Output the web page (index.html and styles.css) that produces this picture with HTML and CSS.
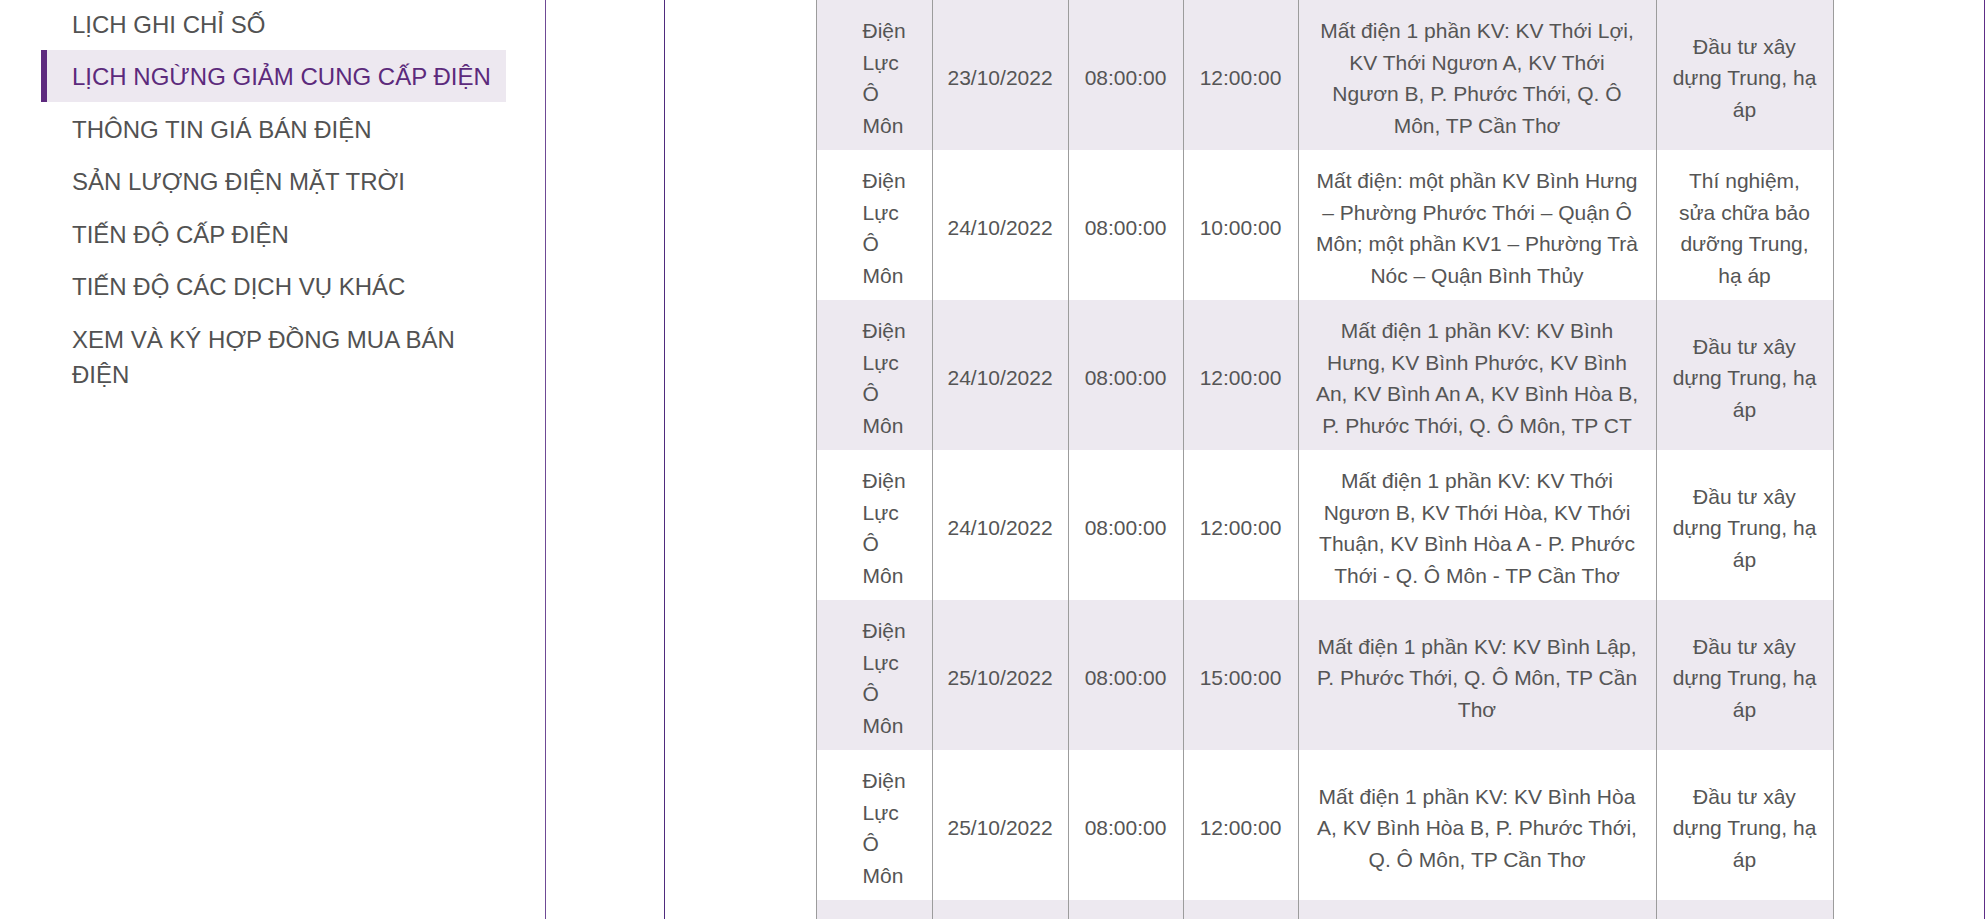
FILE: index.html
```html
<!DOCTYPE html>
<html lang="vi">
<head>
<meta charset="utf-8">
<title>Lịch ngừng giảm cung cấp điện</title>
<link rel="stylesheet" href="styles.css">
</head>
<body>
<div class="page">
  <aside class="sidebar">
    <ul class="menu">
      <li class="menu-item"><a href="#">LỊCH GHI CHỈ SỐ</a></li>
      <li class="menu-item active"><a href="#">LỊCH NGỪNG GIẢM CUNG CẤP ĐIỆN</a></li>
      <li class="menu-item"><a href="#">THÔNG TIN GIÁ BÁN ĐIỆN</a></li>
      <li class="menu-item"><a href="#">SẢN LƯỢNG ĐIỆN MẶT TRỜI</a></li>
      <li class="menu-item"><a href="#">TIẾN ĐỘ CẤP ĐIỆN</a></li>
      <li class="menu-item"><a href="#">TIẾN ĐỘ CÁC DỊCH VỤ KHÁC</a></li>
      <li class="menu-item"><a href="#">XEM VÀ KÝ HỢP ĐỒNG MUA BÁN ĐIỆN</a></li>
    </ul>
  </aside>
  <div class="rail"></div>
  <main class="main">
    <table class="schedule">
      <colgroup>
        <col class="c-unit">
        <col class="c-date">
        <col class="c-time">
        <col class="c-time">
        <col class="c-area">
        <col class="c-reason">
      </colgroup>
      <tbody>
        <tr class="odd">
          <td class="unit">Điện Lực Ô Môn</td>
          <td>23/10/2022</td>
          <td>08:00:00</td>
          <td>12:00:00</td>
          <td>Mất điện 1 phần KV: KV Thới Lợi, KV Thới Ngươn A, KV Thới Ngươn B, P. Phước Thới, Q. Ô Môn, TP Cần Thơ</td>
          <td class="last">Đầu tư xây dựng Trung, hạ áp</td>
        </tr>
        <tr>
          <td class="unit">Điện Lực Ô Môn</td>
          <td>24/10/2022</td>
          <td>08:00:00</td>
          <td>10:00:00</td>
          <td>Mất điện: một phần KV Bình Hưng – Phường Phước Thới – Quận Ô Môn; một phần KV1 – Phường Trà Nóc – Quận Bình Thủy</td>
          <td class="last">Thí nghiệm, sửa chữa bảo dưỡng Trung, hạ áp</td>
        </tr>
        <tr class="odd">
          <td class="unit">Điện Lực Ô Môn</td>
          <td>24/10/2022</td>
          <td>08:00:00</td>
          <td>12:00:00</td>
          <td>Mất điện 1 phần KV: KV Bình Hưng, KV Bình Phước, KV Bình An, KV Bình An A, KV Bình Hòa B, P. Phước Thới, Q. Ô Môn, TP CT</td>
          <td class="last">Đầu tư xây dựng Trung, hạ áp</td>
        </tr>
        <tr>
          <td class="unit">Điện Lực Ô Môn</td>
          <td>24/10/2022</td>
          <td>08:00:00</td>
          <td>12:00:00</td>
          <td>Mất điện 1 phần KV: KV Thới Ngươn B, KV Thới Hòa, KV Thới Thuận, KV Bình Hòa A - P. Phước Thới - Q. Ô Môn - TP Cần Thơ</td>
          <td class="last">Đầu tư xây dựng Trung, hạ áp</td>
        </tr>
        <tr class="odd">
          <td class="unit">Điện Lực Ô Môn</td>
          <td>25/10/2022</td>
          <td>08:00:00</td>
          <td>15:00:00</td>
          <td>Mất điện 1 phần KV: KV Bình Lập, P. Phước Thới, Q. Ô Môn, TP Cần Thơ</td>
          <td class="last">Đầu tư xây dựng Trung, hạ áp</td>
        </tr>
        <tr>
          <td class="unit">Điện Lực Ô Môn</td>
          <td>25/10/2022</td>
          <td>08:00:00</td>
          <td>12:00:00</td>
          <td>Mất điện 1 phần KV: KV Bình Hòa A, KV Bình Hòa B, P. Phước Thới, Q. Ô Môn, TP Cần Thơ</td>
          <td class="last">Đầu tư xây dựng Trung, hạ áp</td>
        </tr>
        <tr class="odd tail">
          <td class="unit"></td>
          <td></td>
          <td></td>
          <td></td>
          <td></td>
          <td class="last"></td>
        </tr>
      </tbody>
    </table>
  </main>
</div>
</body>
</html>
```

FILE: styles.css
```css
html, body {
  margin: 0;
  padding: 0;
  overflow: hidden;
  background: #ffffff;
}

body {
  font-family: "Liberation Sans", Arial, sans-serif;
  color: #555555;
}

.page {
  display: flex;
  align-items: stretch;
  width: 1985px;
  min-height: 1200px;
}

/* ---------- sidebar ---------- */
.sidebar {
  flex: none;
  width: 546px;
  box-sizing: border-box;
  border-right: 1px solid #6f4a95;
  padding-left: 41px;
}

.menu {
  list-style: none;
  margin: -3px 0 0 0;
  padding: 0;
  width: 465px;
}

.menu-item a {
  display: block;
  border-left: 6px solid transparent;
  padding: 9.5px 10px 7.5px 25px;
  font-size: 24px;
  line-height: 35.5px;
  color: #525252;
  text-decoration: none;
}

.menu-item.active a {
  border-left-color: #5d2a7e;
  background: #ede8f0;
  color: #5c2a7c;
}

/* ---------- middle rail ---------- */
.rail {
  flex: none;
  width: 118px;
  border-right: 1px solid #4f2b7d;
}

/* ---------- main ---------- */
.main {
  flex: 1;
  border-right: 1px solid #5e2d86;
  display: flex;
  justify-content: center;
  align-items: flex-start;
}

.schedule {
  width: 1018px;
  table-layout: fixed;
  border-collapse: separate;
  border-spacing: 0;
  font-size: 21px;
  line-height: 31.5px;
  color: #555555;
}

.c-unit { width: 116px; }
.c-date { width: 136px; }
.c-time { width: 115px; }
.c-area { width: 358px; }
.c-reason { width: 178px; }

.schedule td {
  box-sizing: border-box;
  border-left: 1px solid #9c9c9c;
  padding: 15px 15px 9px;
  text-align: center;
  vertical-align: middle;
}

.schedule td.unit {
  text-align: left;
  padding-left: 46px;
  padding-right: 12px;
}

.schedule td.last {
  border-right: 1px solid #9c9c9c;
}

.schedule tr.odd td {
  background: #ede9f0;
}

.schedule tr.tail td {
  height: 150px;
}
```
